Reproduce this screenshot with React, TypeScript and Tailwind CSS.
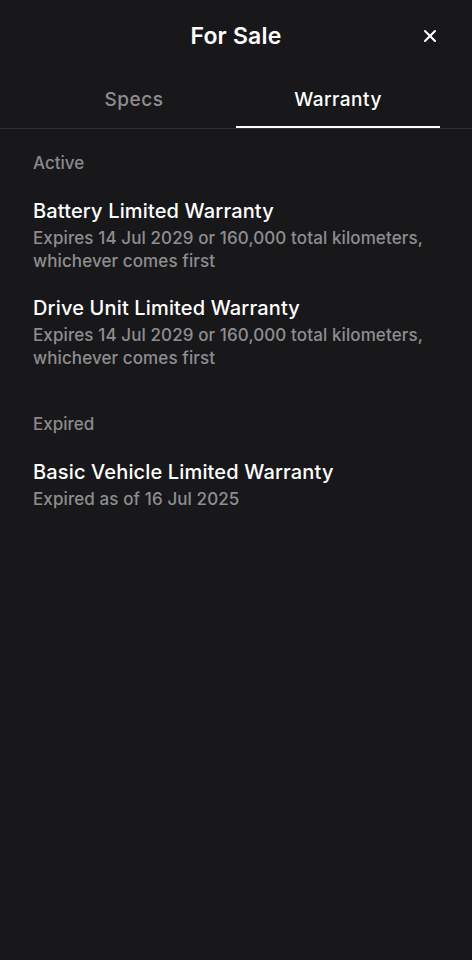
import { X } from "lucide-react";

const sections = [
  {
    label: "Active",
    items: [
      {
        title: "Battery Limited Warranty",
        desc: "Expires 14 Jul 2029 or 160,000 total kilometers, whichever comes first",
      },
      {
        title: "Drive Unit Limited Warranty",
        desc: "Expires 14 Jul 2029 or 160,000 total kilometers, whichever comes first",
      },
    ],
  },
  {
    label: "Expired",
    items: [
      {
        title: "Basic Vehicle Limited Warranty",
        desc: "Expired as of 16 Jul 2025",
      },
    ],
  },
];

function App() {
  return (
    <div
      className="min-h-screen w-full bg-[#18181a] text-white"
      style={{ fontFamily: "Inter, 'Open Sans', sans-serif" }}
    >
      <div className="relative flex h-[72px] items-center justify-center">
        <h1 className="text-[23px] font-semibold tracking-[0.2px]">For Sale</h1>
        <button className="absolute right-[32px] top-[26px] text-white">
          <X size={20} strokeWidth={2.5} />
        </button>
      </div>

      <div className="flex border-b border-[#2e2e30] px-8">
        <button className="flex h-[56px] flex-1 items-center justify-center border-b-2 border-transparent pt-[2px] text-[19px] font-medium tracking-[0.5px] text-[#8e8e90]">
          Specs
        </button>
        <button className="flex h-[56px] flex-1 items-center justify-center border-b-2 border-white pt-[2px] text-[19px] font-medium tracking-[0.5px] text-white">
          Warranty
        </button>
      </div>

      <div className="px-[33px] pt-[22px]">
        {sections.map((section, i) => (
          <div key={section.label} className={i > 0 ? "mt-[42px]" : ""}>
            <p className="text-[17px] leading-[24px] font-medium text-[#8a8a8c]">
              {section.label}
            </p>
            {section.items.map((item, j) => (
              <div key={item.title} className={j === 0 ? "mt-[23px]" : "mt-[22px]"}>
                <h2 className="text-[20px] leading-[26px] font-medium tracking-[0.15px] text-white">
                  {item.title}
                </h2>
                <p className="mt-[3px] text-[17px] leading-[23px] font-medium tracking-[0.1px] text-[#8e8e90]">
                  {item.desc}
                </p>
              </div>
            ))}
          </div>
        ))}
      </div>
    </div>
  );
}

export default App;
